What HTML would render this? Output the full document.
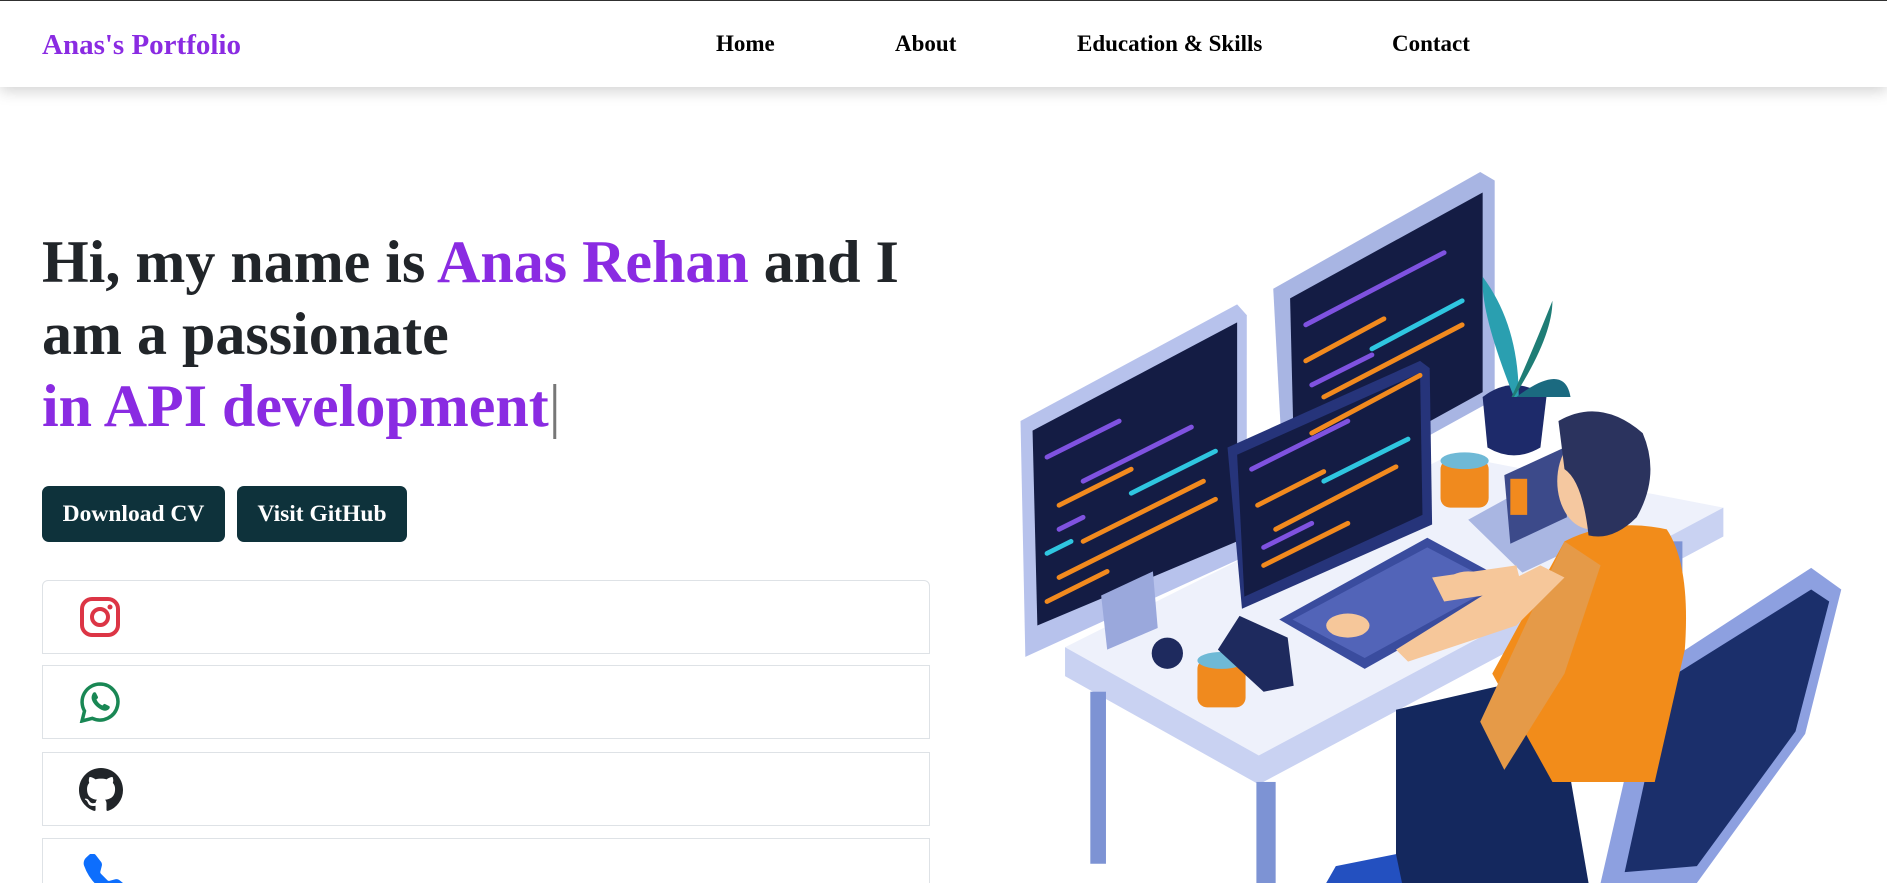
<!DOCTYPE html>
<html style="width:1887px;height:883px;overflow:hidden"><head><meta charset="utf-8"><style>
*{margin:0;padding:0;box-sizing:border-box}
body{width:1887px;height:883px;overflow:hidden;background:#fff;font-family:"Liberation Serif",serif;position:relative}
.top{position:absolute;left:0;top:0;width:1887px;height:1px;background:#333}
nav{position:absolute;left:0;top:1px;width:1887px;height:86px;background:#fff;box-shadow:0 4px 14px rgba(0,0,0,.18);z-index:2}
nav a{position:absolute;top:30px;font-weight:bold;font-size:23px;color:#000;text-decoration:none;line-height:26px}
.brand{left:42px;color:#8a2be2!important;font-size:29px!important;top:31px!important}
h1{position:absolute;left:42px;top:226px;font-size:60px;line-height:72px;color:#212529;font-weight:bold;width:900px}
.p{color:#8a2be2}
.cur{color:#777;font-weight:normal}
.btn{position:absolute;top:486px;height:56px;background:#0e323b;color:#fff;border-radius:7px;font-weight:bold;font-size:23.5px;line-height:56px;text-align:center}
.item{position:absolute;left:42px;width:888px;height:74px;border:1px solid #dee2e6;background:#fff}
.item svg{position:absolute;left:36px;top:15px}
</style></head><body>
<div class="top"></div>
<nav>
<a class="brand">Anas's Portfolio</a>
<a style="left:716px">Home</a>
<a style="left:895px">About</a>
<a style="left:1077px">Education &amp; Skills</a>
<a style="left:1392px">Contact</a>
</nav>
<h1>Hi, my name is <span class="p">Anas Rehan</span> and I am a passionate<br><span class="p">in API development</span><span class="cur">|</span></h1>
<div class="btn" style="left:42px;width:183px">Download CV</div>
<div class="btn" style="left:237px;width:170px">Visit GitHub</div>

<div class="item" style="top:580px;border-radius:6px 6px 0 0">
<svg width="42" height="42" viewBox="0 0 42 42"><rect x="3" y="3" width="36" height="36" rx="10" fill="none" stroke="#dc3545" stroke-width="4"/><circle cx="21" cy="21" r="8" fill="none" stroke="#dc3545" stroke-width="4"/><circle cx="31" cy="11" r="2.5" fill="#dc3545"/></svg></div>
<div class="item" style="top:665px">
<svg width="42" height="42" viewBox="0 0 42 42"><path d="M21 3a18 18 0 0 0-15.5 27L3 40l10.3-2.7A18 18 0 1 0 21 3z" fill="none" stroke="#198754" stroke-width="3.5"/><path d="M14 12c1-1 2.5-1 3 0l2 4c.3 1-1 2-1.5 2.5 1 2.5 3.5 5 6 6 .5-.5 1.5-2 2.5-1.5l4 2c1 .5 1 2 0 3-2 2-5 2.5-9 0-4-2.5-7-6-8-9-1-3 0-5 1-7z" fill="#198754"/></svg></div>
<div class="item" style="top:752px">
<svg width="44" height="44" viewBox="0 0 16 16"><path fill="#212529" d="M8 0C3.580 0 0 3.58 0 8c0 3.54 2.290 6.53 5.47 7.59.4.07.55-.17.55-.38 0-.19-.01-.82-.01-1.49-2.01.37-2.53-.49-2.690-.94-.09-.23-.48-.94-.82-1.130-.28-.15-.68-.52-.01-.53.63-.01 1.08.58 1.23.82.72 1.21 1.87.87 2.33.66.07-.52.28-.87.51-1.07-1.78-.2-3.64-.89-3.64-3.95 0-.87.31-1.59.82-2.15-.08-.2-.36-1.02.08-2.12 0 0 .67-.21 2.2.82.64-.18 1.32-.27 2-.27s1.36.09 2 .27c1.53-1.04 2.2-.82 2.2-.82.44 1.1.16 1.92.08 2.12.51.56.82 1.27.82 2.15 0 3.07-1.87 3.75-3.65 3.95.29.25.54.73.54 1.48 0 1.07-.01 1.93-.01 2.2 0 .21.15.46.55.38A8.01 8.01 0 0 0 16 8c0-4.42-3.58-8-8-8"/></svg></div>
<div class="item" style="top:838px">
<svg width="44" height="44" viewBox="0 0 16 16"><path fill="#0d6efd" d="M3.65.32a1.7 1.7 0 0 1 2.54.16L7.98 2.8c.33.42.45.97.32 1.49l-.55 2.18a.68.68 0 0 0 .18.65l2.45 2.45a.68.68 0 0 0 .65.18l2.18-.55a1.7 1.7 0 0 1 1.49.32l2.3 1.79c.83.64.9 1.86.16 2.6l-1.03 1.03c-.74.74-1.840 1.06-2.87.7a18.6 18.6 0 0 1-7-4.42 18.6 18.6 0 0 1-4.42-7c-.36-1.030-.04-2.14.7-2.87z"/></svg></div>

<svg style="position:absolute;left:0;top:0" width="1887" height="883" viewBox="0 0 1568 734" preserveAspectRatio="none">
<polygon points="885,538 1205,378 1432,422 1432,446 1046,652 885,562" fill="#eef1fb"/>
<polygon points="885,538 1046,628 1432,422 1432,446 1046,652 885,562" fill="#c9d2f2"/>
<rect x="906" y="575" width="13" height="143" fill="#7d93d4"/>
<rect x="1044" y="650" width="16" height="84" fill="#7d93d4"/>
<rect x="1385" y="450" width="13" height="90" fill="#7d93d4"/>
<polygon points="1058,240 1230,143 1242,150 1242,332 1068,428" fill="#a8b5e3"/>
<polygon points="1072,248 1232,160 1232,326 1076,412" fill="#141c44"/>
<polygon points="848,350 1028,253 1036,262 1036,462 852,546" fill="#b7c2ec"/>
<polygon points="858,358 1028,268 1028,450 862,520" fill="#141c44"/>
<polygon points="915,495 958,475 962,522 920,540" fill="#9aa8dc"/>
<polygon points="1020,372 1180,300 1188,306 1190,436 1032,506" fill="#26347a"/>
<polygon points="1028,378 1180,310 1182,428 1034,496" fill="#141c44"/>
<g stroke-width="4" stroke-linecap="round">
<g stroke="#f28a1e"><line x1="880" y1="420" x2="940" y2="390"/><line x1="900" y1="450" x2="1000" y2="400"/><line x1="880" y1="480" x2="1010" y2="415"/><line x1="870" y1="500" x2="920" y2="475"/><line x1="1085" y1="300" x2="1150" y2="265"/><line x1="1100" y1="330" x2="1215" y2="270"/><line x1="1090" y1="360" x2="1180" y2="312"/><line x1="1045" y1="420" x2="1100" y2="392"/><line x1="1060" y1="440" x2="1160" y2="388"/><line x1="1050" y1="470" x2="1120" y2="435"/></g>
<g stroke="#7f52e0"><line x1="870" y1="380" x2="930" y2="350"/><line x1="900" y1="400" x2="990" y2="355"/><line x1="880" y1="440" x2="900" y2="430"/><line x1="1085" y1="270" x2="1200" y2="210"/><line x1="1090" y1="320" x2="1140" y2="295"/><line x1="1040" y1="390" x2="1120" y2="350"/><line x1="1050" y1="455" x2="1090" y2="435"/></g>
<g stroke="#2fc6e0"><line x1="940" y1="410" x2="1010" y2="375"/><line x1="1140" y1="290" x2="1215" y2="250"/><line x1="1100" y1="400" x2="1170" y2="365"/><line x1="870" y1="460" x2="890" y2="450"/></g>
</g>
<polygon points="1063,515 1186,447 1258,486 1134,556" fill="#3a4c9e"/>
<polygon points="1074,515 1186,455 1245,486 1134,547" fill="#5264b8"/>
<polygon points="1220,432 1300,388 1320,400 1320,450 1265,476" fill="#a9b6e2"/>
<polygon points="1250,395 1300,372 1302,430 1255,452" fill="#3c4a8a"/>
<rect x="1255" y="398" width="14" height="30" fill="#f28a1e"/>
<rect x="1197" y="382" width="40" height="40" rx="8" fill="#f08a1e"/><ellipse cx="1217" cy="383" rx="20" ry="7" fill="#6fb9d6"/>
<rect x="995" y="548" width="40" height="40" rx="8" fill="#f08a1e"/><ellipse cx="1015" cy="549" rx="20" ry="7" fill="#6fb9d6"/>
<polygon points="1012,540 1030,512 1070,530 1075,570 1050,575" fill="#1e2a5e"/>
<circle cx="970" cy="543" r="13" fill="#1e2a5e"/>
<path d="M1232,330 Q1258,310 1285,330 L1280,372 Q1258,385 1236,372 Z" fill="#1d2a6a"/>
<path d="M1258,330 Q1230,260 1232,230 Q1262,270 1262,330Z" fill="#2a9fb0"/>
<path d="M1258,330 Q1290,280 1290,250 Q1270,300 1256,330Z" fill="#1f7d76"/>
<path d="M1260,330 Q1300,300 1305,330Z" fill="#1b6a80"/>
<polygon points="1370,560 1505,472 1530,490 1500,610 1410,734 1330,734" fill="#8da0e0"/>
<polygon points="1385,565 1505,490 1520,500 1492,608 1410,720 1350,725" fill="#1b2f6b"/>
<path d="M1160,590 L1290,560 L1320,734 L1160,734 Z" fill="#14285e"/>
<path d="M1300,450 Q1340,430 1385,440 Q1405,470 1400,540 L1375,650 L1290,650 L1240,560 Z" fill="#f28c1a"/>
<path d="M1300,450 L1330,470 L1300,560 L1250,640 L1230,600 Z" fill="#e59a48"/>
<path d="M1160,540 L1240,490 L1280,470 L1300,480 L1260,520 L1170,550Z" fill="#f6c79a"/>
<path d="M1190,480 L1260,470 L1265,490 L1200,500Z" fill="#f6c79a"/>
<ellipse cx="1120" cy="520" rx="18" ry="10" fill="#f6c79a"/>
<ellipse cx="1220" cy="485" rx="18" ry="10" fill="#f6c79a"/>
<ellipse cx="1322" cy="400" rx="28" ry="40" fill="#f5c8a0"/>
<path d="M1295,350 Q1330,330 1365,360 Q1380,395 1360,430 Q1340,450 1320,445 Q1315,400 1300,390 Z" fill="#2b335e"/>
<path d="M1110,720 L1160,710 L1165,734 L1102,734 Z" fill="#2350c0"/>
</svg>
</body></html>
